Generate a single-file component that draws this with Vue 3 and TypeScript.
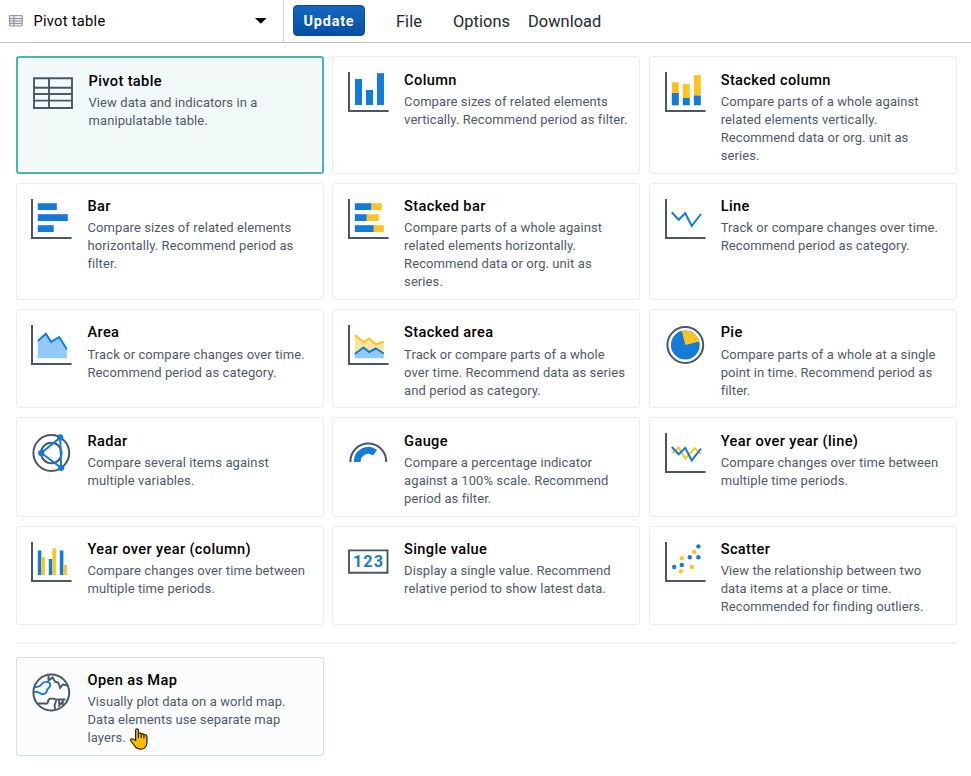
<script setup lang="ts">
type Shape = { tag: string; attrs: Record<string, string | number>; text?: string }
type Card = { title: string; text: string; icon: Shape[]; selected?: boolean }

const BLUE = '#147cd7'
const YELLOW = '#ffc324'
const SLATE = '#4a5768'

const rect = (x: number, y: number, x2: number, y2: number, fill: string): Shape => ({
  tag: 'rect', attrs: { x, y, width: x2 - x, height: y2 - y, fill },
})
const line = (d: string, stroke: string, width = 2): Shape => ({
  tag: 'path', attrs: { d, stroke, 'stroke-width': width, fill: 'none' },
})
const area = (d: string, fill: string): Shape => ({ tag: 'path', attrs: { d, fill } })
const ring = (cx: number, cy: number, r: number): Shape => ({
  tag: 'circle', attrs: { cx, cy, r, stroke: SLATE, 'stroke-width': 2, fill: 'none' },
})
const dot = (cx: number, cy: number, r: number, fill: string): Shape => ({
  tag: 'circle', attrs: { cx, cy, r, fill },
})
const axis = line('M1 0V39H40.6', SLATE)

const cards: Card[] = [
  {
    title: 'Pivot table',
    text: 'View data and indicators in a manipulatable table.',
    selected: true,
    icon: [line('M1 5.2H39V35H1ZM1 14.8H39M1 21H39M1 27.6H39M16 5V35', SLATE, 1.9)],
  },
  {
    title: 'Column',
    text: 'Compare sizes of related elements vertically. Recommend period as filter.',
    icon: [axis, rect(7, 7, 14, 33, BLUE), rect(18, 18, 25, 33, BLUE), rect(29, 1.2, 36, 33, BLUE)],
  },
  {
    title: 'Stacked column',
    text: 'Compare parts of a whole against related elements vertically. Recommend data or org. unit as series.',
    icon: [
      axis,
      rect(6.8, 10.2, 13.8, 21, YELLOW), rect(6.8, 21, 13.8, 33.3, BLUE),
      rect(17.8, 12.2, 24.8, 26, YELLOW), rect(17.8, 26, 24.8, 33.3, BLUE),
      rect(28.8, 3.2, 35.8, 23.5, YELLOW), rect(28.8, 23.5, 35.8, 33.3, BLUE),
    ],
  },
  {
    title: 'Bar',
    text: 'Compare sizes of related elements horizontally. Recommend period as filter.',
    icon: [axis, rect(6.8, 4.2, 25.8, 11, BLUE), rect(6.8, 15.2, 36.8, 22, BLUE), rect(6.8, 26.2, 22.7, 33, BLUE)],
  },
  {
    title: 'Stacked bar',
    text: 'Compare parts of a whole against related elements horizontally. Recommend data or org. unit as series.',
    icon: [
      axis,
      rect(6.8, 4.2, 23.5, 11, BLUE), rect(23.5, 4.2, 33.8, 11, YELLOW),
      rect(6.8, 15.2, 18.8, 22, BLUE), rect(18.8, 15.2, 30.8, 22, YELLOW),
      rect(6.8, 26.2, 25.8, 33, BLUE), rect(25.8, 26.2, 35.8, 33, YELLOW),
    ],
  },
  {
    title: 'Line',
    text: 'Track or compare changes over time. Recommend period as category.',
    icon: [axis, line('M6.8 13.3L13.7 20.8L20.2 14.2L26.7 27L36 15', BLUE)],
  },
  {
    title: 'Area',
    text: 'Track or compare changes over time. Recommend period as category.',
    icon: [
      axis,
      area('M6.8 16L14.8 8.7L20.2 16.8L28.2 12L35.8 24.3V33.2H6.8Z', '#91c9f9'),
      line('M6.8 16L14.8 8.7L20.2 16.8L28.2 12L35.8 24.3', BLUE),
    ],
  },
  {
    title: 'Stacked area',
    text: 'Track or compare parts of a whole over time. Recommend data as series and period as category.',
    icon: [
      axis,
      area('M6.8 9.9L15.5 17L21.2 13.5L27.8 19.3L35.8 16.7V30H6.8Z', '#ffe4a0'),
      area('M6.8 29L15.5 22.5L21.2 27L27.8 23.5L35.8 28.5V33.2H6.8Z', '#91c9f9'),
      line('M6.8 9.9L15.5 17L21.2 13.5L27.8 19.3L35.8 16.7', YELLOW),
      line('M6.8 29L15.5 22.5L21.2 27L27.8 23.5L35.8 28.5', BLUE),
    ],
  },
  {
    title: 'Pie',
    text: 'Compare parts of a whole at a single point in time. Recommend period as filter.',
    icon: [
      ring(20.3, 20, 17.9),
      dot(20.3, 20, 14.4, BLUE),
      area('M20.3 20L16.9 6A14.4 14.4 0 0 1 34.3 16.6Z', YELLOW),
    ],
  },
  {
    title: 'Radar',
    text: 'Compare several items against multiple variables.',
    icon: [
      ring(20.3, 20, 17.9), ring(20.3, 20, 10.2),
      line('M29.2 4.6L30.2 34.8L10.2 20Z', BLUE),
      dot(29.2, 4.4, 3.1, BLUE), dot(30.2, 34.8, 3.1, BLUE), dot(10.2, 20, 3.1, BLUE),
    ],
  },
  {
    title: 'Gauge',
    text: 'Compare a percentage indicator against a 100% scale. Recommend period as filter.',
    icon: [
      line('M2.4 29V28.4A17.9 17.9 0 0 1 38.2 28.4V29', SLATE),
      line('M9.2 29V28.6A11.1 11.1 0 0 1 27 19.7', BLUE, 6.8),
    ],
  },
  {
    title: 'Year over year (line)',
    text: 'Compare changes over time between multiple time periods.',
    icon: [
      axis,
      line('M7 20.3L13.7 14.5L20.4 25.9L29.6 15.2L35.8 21', YELLOW),
      line('M6.8 14L13.7 21.3L20.2 14.9L26.7 27.4L36 15.6', BLUE),
    ],
  },
  {
    title: 'Year over year (column)',
    text: 'Compare changes over time between multiple time periods.',
    icon: [
      axis,
      rect(6.8, 8.5, 10.4, 33, BLUE), rect(10.4, 15, 13.9, 33, YELLOW),
      rect(17.8, 17, 21.4, 33, BLUE), rect(21.4, 6.3, 24.9, 33, YELLOW),
      rect(28.8, 8.5, 32.4, 33, BLUE), rect(32.4, 23, 35.9, 33, YELLOW),
    ],
  },
  {
    title: 'Single value',
    text: 'Display a single value. Recommend relative period to show latest data.',
    icon: [
      line('M1 8.4H39.5V30.7H1Z', SLATE, 1.9),
      {
        tag: 'text',
        attrs: { x: 5, y: 25, fill: BLUE, 'font-size': 16.2, 'font-weight': 700, textLength: 30 },
        text: '123',
      },
    ],
  },
  {
    title: 'Scatter',
    text: 'View the relationship between two data items at a place or time. Recommended for finding outliers.',
    icon: [
      axis,
      dot(9.2, 25, 2.2, BLUE), dot(16.8, 23, 2.2, BLUE), dot(24.8, 15.3, 2.2, BLUE),
      dot(33.4, 15.3, 2.2, BLUE), dot(33.4, 4.4, 2.2, BLUE),
      dot(16, 29.3, 2.2, YELLOW), dot(16.9, 16.3, 2.2, YELLOW),
      dot(26.8, 25, 2.2, YELLOW), dot(29.2, 9.9, 2.2, YELLOW),
    ],
  },
]

const mapIcon: Shape[] = [
  line('M6.5 30.5H14.2Q16.5 31.3 17 29Q17 25.8 19.8 25.6H22.5Q25 27 28 26.5H34.5M25.5 27.5Q22.5 32 24.3 36.5M28.2 27V32.5L31.8 28.7V32.5M17.5 2.5V7.5L21.5 4.5L24.2 8.8L27.2 9.5L29.2 15L31.5 11.5L36.5 12.5', SLATE, 1.9),
  line('M3.4 14.3C8 14.2 9.8 13.2 11.2 10.4Q13.2 8.4 17 9Q20.6 10.6 18.7 13.8C16.5 15.7 16.2 16 15.5 19Q13.6 22 9.8 20.6Q7 18.3 3.2 19.2', BLUE, 1.9),
  ring(20.3, 19.5, 17.9),
]
</script>

<template>
  <div class="page">
    <header class="bar">
      <div class="type">
        <svg class="mini" viewBox="0 0 14 12">
          <path d="M.6.6H13.2V10.9H.6Z" fill="#eef0f2" />
          <path d="M.6.6H13.2V10.9H.6ZM.6 3.6H13.2M.6 6H13.2M.6 8.4H13.2M5 .6V10.9" fill="none" stroke="#7c8592" stroke-width=".9" />
        </svg>
        <span class="type-name">Pivot table</span>
        <svg class="caret" viewBox="0 0 12 6"><path d="M0 0H11.6L5.8 5.8Z" /></svg>
      </div>
      <button class="update">Update</button>
      <nav class="menu">
        <span class="file">File</span>
        <span class="options">Options</span>
        <span>Download</span>
      </nav>
    </header>
    <main class="content">
      <div class="grid">
        <article v-for="card in cards" :key="card.title" class="card" :class="{ selected: card.selected }">
          <svg class="icon" viewBox="0 0 41 40">
            <component :is="s.tag" v-for="(s, i) in card.icon" :key="i" v-bind="s.attrs">{{ s.text }}</component>
          </svg>
          <div class="copy">
            <h3>{{ card.title }}</h3>
            <p>{{ card.text }}</p>
          </div>
        </article>
      </div>
      <hr class="rule">
      <article class="card map">
        <svg class="icon" viewBox="0 0 41 40">
          <component :is="s.tag" v-for="(s, i) in mapIcon" :key="i" v-bind="s.attrs" />
        </svg>
        <div class="copy">
          <h3>Open as Map</h3>
          <p>Visually plot data on a world map. Data elements use separate map layers.</p>
        </div>
        <svg class="hand" viewBox="0 0 18 22">
          <path d="M5.6 12.5V2.3Q5.6.8 7 .8T8.4 2.3V5.2Q10 4.3 11 5.7Q12.7 5.1 13.8 6.5Q16.9 6.4 17 9.3V14.5Q16.8 18.4 14.2 20.2Q9.5 22.4 6 19.5L1.2 13.5Q.1 11.8 1.3 11.1Q2.5 10.5 3.8 11.5Z" fill="#ffbc00" stroke="#2a2415" stroke-width="1.2" />
          <path d="M8.4 5V10M11.1 5.7V10M13.9 6.6V10.5" fill="none" stroke="#2a2415" stroke-width="1.2" />
        </svg>
      </article>
    </main>
  </div>
</template>

<style>
body {
  margin: 0;
  background: #fff;
}
</style>

<style scoped>
.page {
  box-sizing: border-box;
  width: 971px;
  height: 776px;
  overflow: hidden;
  font-family: Roboto, sans-serif;
  color: #000;
}
.bar {
  box-sizing: border-box;
  display: flex;
  align-items: flex-start;
  height: 43px;
  border-bottom: 1px solid #bcbec4;
}
.type {
  box-sizing: border-box;
  display: flex;
  align-items: center;
  width: 284px;
  height: 42px;
  padding: 0 16px 0 9px;
  border-right: 1px solid #d5d8dc;
}
.mini {
  width: 14px;
  height: 12px;
}
.type-name {
  flex: 1;
  padding-left: 10.4px;
  font-size: 14.6px;
  letter-spacing: 0.31px;
}
.caret {
  width: 12px;
  height: 6px;
}
.update {
  box-sizing: border-box;
  width: 72px;
  height: 31px;
  margin: 5px 0 0 9px;
  padding: 0;
  border: 1px solid #104a9c;
  border-radius: 4px;
  background: linear-gradient(#1565c0, #0650a3);
  color: #fff;
  font: 700 14.4px/31px Roboto, sans-serif;
  letter-spacing: 0.8px;
}
.menu {
  display: flex;
  padding-left: 31px;
  font-size: 16.4px;
  line-height: 43px;
  letter-spacing: 0.05px;
  color: #212934;
}
.file {
  width: 57px;
}
.options {
  width: 75px;
}
.content {
  padding: 13.2px 14.2px 0 15.8px;
}
.grid {
  display: grid;
  grid-template-columns: repeat(3, 307.8px);
  grid-template-rows: 117.4px 117.4px 99.4px 99.4px 99.4px;
  gap: 9px 8.8px;
}
.card {
  position: relative;
  box-sizing: border-box;
  display: flex;
  align-items: flex-start;
  padding: 15px 8px 0 14.6px;
  border: 1px solid #e8edf2;
  border-radius: 3px;
}
.selected {
  border: 2px solid #4db6ac;
  background: #f1f9f9;
}
.icon {
  flex: none;
  width: 41px;
  height: 40px;
  overflow: visible;
}
.selected .icon {
  margin: 0 -0.8px 0 0.8px;
}
.copy {
  padding-left: 15.1px;
}
h3 {
  margin: -1.5px 0 0;
  font-size: 14.6px;
  line-height: 18px;
  font-weight: 500;
  letter-spacing: 0.37px;
}
p {
  margin: 4.2px 0 0;
  font-size: 13px;
  line-height: 18px;
  letter-spacing: 0.09px;
  color: #4f5b6b;
}
.rule {
  width: 941px;
  height: 2px;
  margin: 16.6px 0 13.2px;
  border: 0;
  background: #f1f4f7;
}
.map {
  width: 307.8px;
  height: 99px;
  border-color: #d5dde5;
  background: #fbfcfd;
}
.map p {
  margin-top: 3.7px;
}
.hand {
  position: absolute;
  left: 113px;
  top: 70px;
  width: 18px;
  height: 22px;
}
</style>
